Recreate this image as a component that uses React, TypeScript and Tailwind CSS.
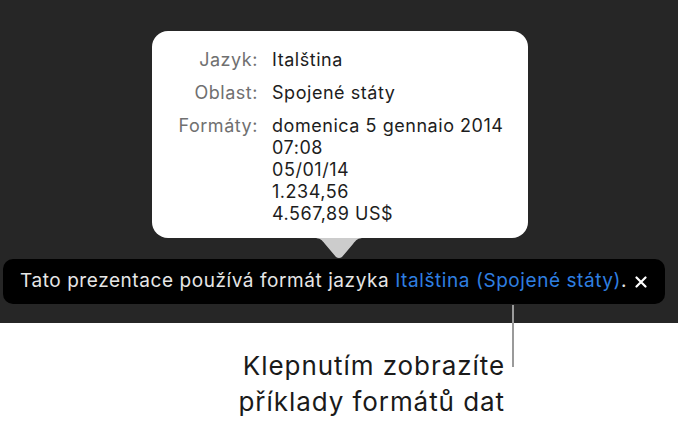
import React from "react";

const rows: { label: string; values: string[] }[] = [
  { label: "Jazyk:", values: ["Italština"] },
  { label: "Oblast:", values: ["Spojené státy"] },
  {
    label: "Formáty:",
    values: ["domenica 5 gennaio 2014", "07:08", "05/01/14", "1.234,56", "4.567,89 US$"],
  },
];

export default function App() {
  return (
    <div
      className="relative w-[678px] h-[423px] overflow-hidden bg-white"
      style={{ fontFamily: "Inter, 'Noto Sans', sans-serif" }}
    >
      {/* dark stage */}
      <div className="flex h-[323px] flex-col bg-[#262626] pt-[31px]">
        {/* popover */}
        <div className="ml-[152px] w-[376px] rounded-[16px] bg-white pt-[18px] pb-[13px]">
          <div className="grid grid-cols-[106px_1fr] gap-x-[14px] gap-y-[11px] text-[18px] leading-[22px] tracking-[0.03em]">
            {rows.map((r) => (
              <React.Fragment key={r.label}>
                <div className="text-right text-[#707070]">{r.label}</div>
                <div className="flex flex-col text-[#1d1d1d]">
                  {r.values.map((v) => (
                    <span key={v}>{v}</span>
                  ))}
                </div>
              </React.Fragment>
            ))}
          </div>
        </div>
        {/* arrow */}
        <svg className="ml-[314px] block" width="50" height="20" viewBox="0 0 50 20">
          <path d="M0 0 H50 C44 0 42 2 39 6 L28 19 Q25 21 22 19 L11 6 C8 2 6 0 0 0 Z" fill="#cccccc" />
        </svg>
        {/* banner */}
        <div className="ml-[3px] mt-[1px] flex h-[45px] w-[662px] items-center rounded-[10px] bg-black pl-[17px] pr-[16px] text-[19px] tracking-[0.03em] text-[#e6e6e6]">
          <span className="flex-1 whitespace-nowrap">
            Tato prezentace používá formát jazyka{" "}
            <span className="text-[#2f7fe0]">Italština (Spojené státy)</span>.
          </span>
          <svg width="12" height="12" viewBox="0 0 12 12" className="mr-[2px]">
            <path d="M1.5 1.5 L10.5 10.5 M10.5 1.5 L1.5 10.5" stroke="#ffffff" strokeWidth="2.2" strokeLinecap="round" />
          </svg>
        </div>
      </div>

      {/* callout line */}
      <div className="absolute left-[512px] top-[305px] h-[62px] w-[2px] bg-[#9a9a9a]" />

      {/* caption */}
      <div className="pr-[173px] pt-[25px] text-right text-[26px] leading-[36px] tracking-[0.036em] text-[#1a1a1a]">
        <div>Klepnutím zobrazíte</div>
        <div>příklady formátů dat</div>
      </div>
    </div>
  );
}
